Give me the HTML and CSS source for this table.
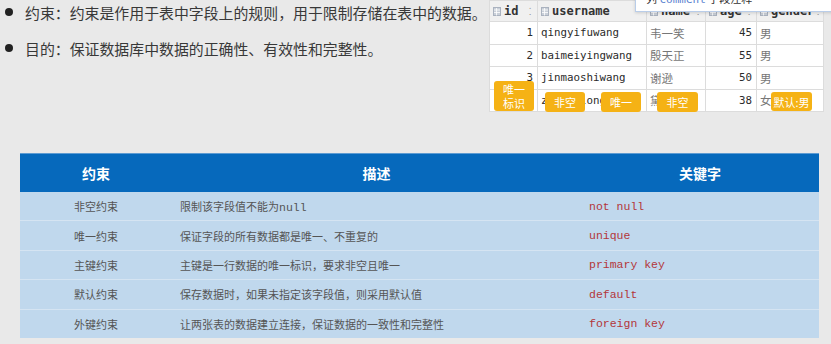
FILE: index.html
```html
<!DOCTYPE html>
<html lang="zh">
<head>
<meta charset="utf-8">
<link rel="stylesheet" href="styles.css">
</head>
<body>
<div class="page">
  <div class="top">
    <ul class="points">
      <li>约束：约束是作用于表中字段上的规则，用于限制存储在表中的数据。</li>
      <li>目的：保证数据库中数据的正确性、有效性和完整性。</li>
    </ul>
    <div class="db">
      <table class="dbt">
        <colgroup><col class="c-id"><col class="c-user"><col class="c-name"><col class="c-age"><col class="c-gender"></colgroup>
        <thead>
          <tr>
            <th><span class="hd"><svg class="ico" viewBox="0 0 8 9"><rect x="0.5" y="0.5" width="7" height="8" fill="#c9cfd8" stroke="#aab2bf"/><path d="M1 3h6M1 5.5h6M3.5 1v7.5" stroke="#fff" stroke-width="0.8"/></svg><b>id</b><span class="sort">⁚</span></span></th>
            <th><span class="hd"><svg class="ico" viewBox="0 0 8 9"><rect x="0.5" y="0.5" width="7" height="8" fill="#c9cfd8" stroke="#aab2bf"/><path d="M1 3h6M1 5.5h6M3.5 1v7.5" stroke="#fff" stroke-width="0.8"/></svg><b>username</b><span class="sort r">⁚</span></span></th>
            <th><span class="hd"><svg class="ico" viewBox="0 0 8 9"><rect x="0.5" y="0.5" width="7" height="8" fill="#c9cfd8" stroke="#aab2bf"/><path d="M1 3h6M1 5.5h6M3.5 1v7.5" stroke="#fff" stroke-width="0.8"/></svg><b>name</b><span class="sort">⁚</span></span></th>
            <th><span class="hd"><svg class="ico" viewBox="0 0 8 9"><rect x="0.5" y="0.5" width="7" height="8" fill="#c9cfd8" stroke="#aab2bf"/><path d="M1 3h6M1 5.5h6M3.5 1v7.5" stroke="#fff" stroke-width="0.8"/></svg><b>age</b><span class="sort">⁚</span></span></th>
            <th><span class="hd"><svg class="ico" viewBox="0 0 8 9"><rect x="0.5" y="0.5" width="7" height="8" fill="#c9cfd8" stroke="#aab2bf"/><path d="M1 3h6M1 5.5h6M3.5 1v7.5" stroke="#fff" stroke-width="0.8"/></svg><b>gender</b><span class="sort">⁚</span></span></th>
          </tr>
        </thead>
        <tbody>
          <tr><td class="num">1</td><td>qingyifuwang</td><td class="cn">韦一笑</td><td class="num">45</td><td class="cn">男</td></tr>
          <tr><td class="num">2</td><td>baimeiyingwang</td><td class="cn">殷天正</td><td class="num">55</td><td class="cn">男</td></tr>
          <tr><td class="num">3</td><td>jinmaoshiwang</td><td class="cn">谢逊</td><td class="num">50</td><td class="cn">男</td></tr>
          <tr><td class="num">4</td><td>zishanlongwang</td><td class="cn">黛绮丝</td><td class="num">38</td><td class="cn">女</td></tr>
        </tbody>
      </table>
      <div class="tip"><span class="kw">列</span> <span class="blue">comment</span> 字段注释</div>
      <span class="badge b-pk">唯一<br>标识</span>
      <span class="badge b-nn1">非空</span>
      <span class="badge b-uq">唯一</span>
      <span class="badge b-nn2">非空</span>
      <span class="badge b-df">默认:男</span>
    </div>
  </div>

  <table class="cons">
    <colgroup><col class="k1"><col class="k2"><col class="k3"></colgroup>
    <thead>
      <tr><th>约束</th><th>描述</th><th>关键字</th></tr>
    </thead>
    <tbody>
      <tr><td class="name">非空约束</td><td class="desc">限制该字段值不能为<span class="m">null</span></td><td class="code">not null</td></tr>
      <tr><td class="name">唯一约束</td><td class="desc">保证字段的所有数据都是唯一、不重复的</td><td class="code">unique</td></tr>
      <tr><td class="name">主键约束</td><td class="desc">主键是一行数据的唯一标识，要求非空且唯一</td><td class="code">primary key</td></tr>
      <tr><td class="name">默认约束</td><td class="desc">保存数据时，如果未指定该字段值，则采用默认值</td><td class="code">default</td></tr>
      <tr><td class="name">外键约束</td><td class="desc">让两张表的数据建立连接，保证数据的一致性和完整性</td><td class="code">foreign key</td></tr>
    </tbody>
  </table>
</div>
</body>
</html>
```

FILE: styles.css
```css
html, body {
  margin: 0;
  padding: 0;
  background: #e9e9e9;
}
body {
  width: 831px;
  height: 344px;
  overflow: hidden;
  font-family: "Noto Sans CJK SC", "Noto Sans", sans-serif;
}
.page {
  display: flex;
  flex-direction: column;
}
.top {
  display: flex;
  height: 113px;
}
.points {
  list-style: none;
  margin: 0;
  padding: 3px 0 0 0;
  width: 489px;
  flex: none;
}
.points li {
  display: flex;
  align-items: center;
  height: 18px;
  margin-bottom: 18px;
  font-size: 14.9px;
  color: #383838;
  white-space: nowrap;
}
.points li::before {
  content: "";
  width: 8px;
  height: 8px;
  border-radius: 50%;
  background: #222;
  margin: 0 12px 0 5px;
  flex: none;
}

/* database grid screenshot */
.db {
  position: relative;
  width: 334px;
  flex: none;
  align-self: flex-start;
  background: #fff;
}
.dbt {
  border-collapse: collapse;
  table-layout: fixed;
  width: 334px;
  font-family: "DejaVu Sans Mono", "Liberation Mono", monospace;
  font-size: 10.8px;
  color: #2b2b2b;
}
.c-id { width: 48px; }
.c-user { width: 109px; }
.c-name { width: 59px; }
.c-age { width: 51px; }
.c-gender { width: 67px; }
.dbt th {
  height: 20px;
  padding: 0 3px;
  background: #f0f0f0;
  border: 1px solid #dcdcdc;
  text-align: left;
  font-weight: normal;
  white-space: nowrap;
  overflow: hidden;
}
.hd {
  display: flex;
  align-items: center;
  gap: 3px;
}
.hd b {
  font-weight: bold;
  font-size: 12px;
  color: #333;
}
.ico {
  width: 8px;
  height: 9px;
  flex: none;
}
.sort {
  color: #999;
  font-size: 10px;
  margin-left: auto;
  margin-right: 3px;
}
.sort.r { display: none; }
.dbt td {
  height: 21.5px;
  padding: 0 3px;
  border: 1px solid #dcdcdc;
  white-space: nowrap;
  overflow: hidden;
}
.dbt td.num {
  text-align: right;
  padding-right: 4px;
}
.dbt td.cn {
  font-family: "Noto Sans CJK SC", sans-serif;
  font-size: 11.5px;
  color: #777;
}
.tip {
  position: absolute;
  left: 146px;
  top: -9px;
  width: 220px;
  height: 21px;
  box-sizing: border-box;
  background: #fff;
  border: 1px solid #b9cde9;
  box-shadow: 0 1px 3px rgba(0,0,0,0.15);
  font-size: 11px;
  line-height: 13px;
  padding-left: 10px;
  color: #333;
  white-space: nowrap;
}
.tip .blue { color: #5a7fd0; font-family: "DejaVu Sans Mono", monospace; }
.badge {
  position: absolute;
  background: #f5b215;
  color: #fff;
  font-size: 11px;
  line-height: 14px;
  border-radius: 3px;
  display: flex;
  align-items: center;
  justify-content: center;
  text-align: center;
  height: 20px;
  width: 40px;
}
.b-pk { left: 5px; top: 81px; height: 30px; }
.b-nn1 { left: 56px; top: 92px; }
.b-uq { left: 112px; top: 92px; }
.b-nn2 { left: 168px; top: 92px; width: 41px; }
.b-df { left: 282px; top: 92px; width: 41px; height: 19px; }

/* constraint table */
.cons {
  margin: 40px 0 0 20px;
  width: 799px;
  border-collapse: collapse;
  table-layout: fixed;
  background: #c0d8ed;
}
.k1 { width: 152px; }
.k2 { width: 409px; }
.k3 { width: 238px; }
.cons th {
  height: 38px;
  padding: 0;
  background: #0669bc;
  color: #fff;
  font-size: 14px;
  font-weight: bold;
  text-align: center;
  border-top: 1px solid #5d9bd2;
}
.cons td {
  height: 28.4px;
  padding: 0;
  border-top: 1px solid #d5e4f2;
  font-size: 11px;
  color: #555;
}
.cons tr:first-child td { border-top: none; }
.cons td.name { text-align: center; }
.cons td.desc { padding-left: 8px; }
.cons td.code {
  padding-left: 8px;
  font-family: "Liberation Mono", "DejaVu Sans Mono", monospace;
  font-size: 11.5px;
  color: #b3363a;
}
.m {
  font-family: "Liberation Mono", monospace;
  font-size: 11.5px;
}
```
